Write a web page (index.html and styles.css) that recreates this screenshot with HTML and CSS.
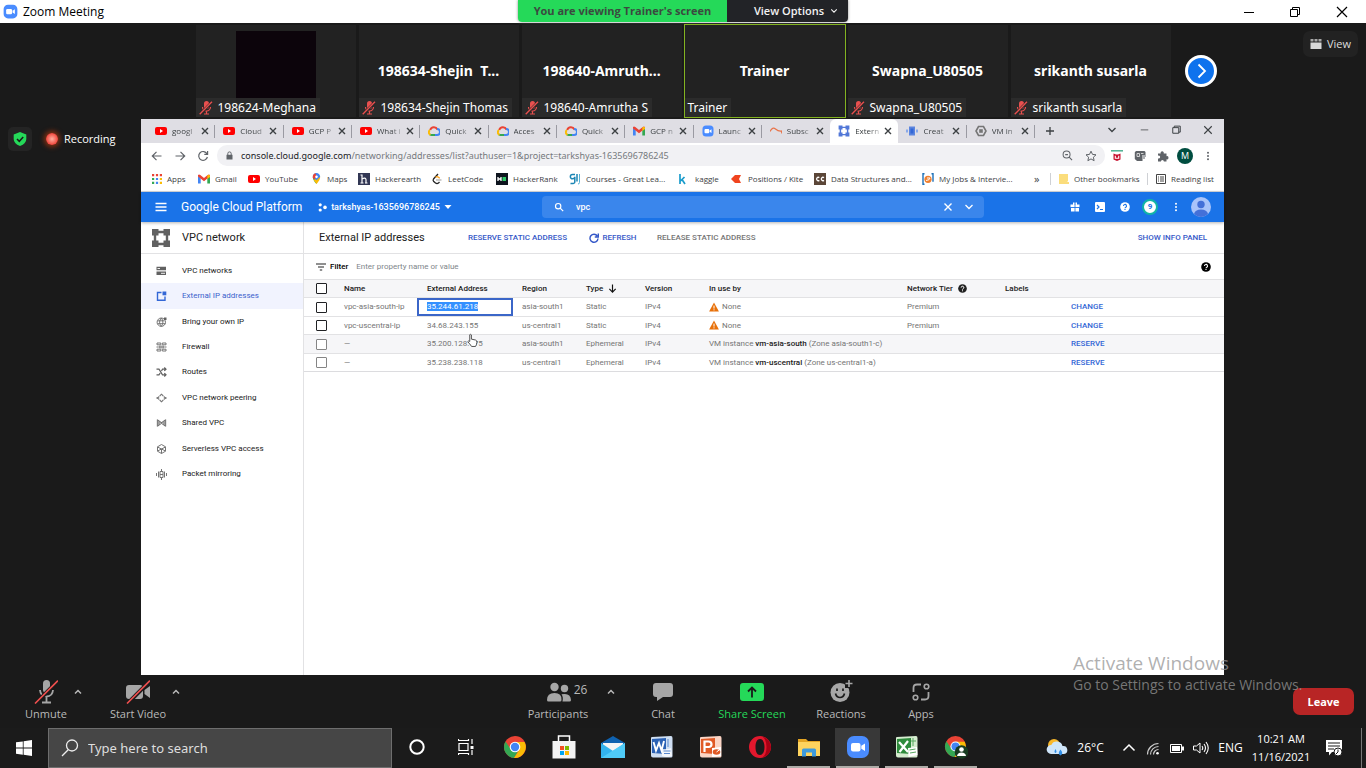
FILE: index.html
```html
<!DOCTYPE html>
<html lang="en">
<head>
<meta charset="utf-8">
<title>Zoom Meeting</title>
<link rel="stylesheet" href="styles.css">
</head>
<body>
<svg class="defs" aria-hidden="true">
  <symbol id="yt" viewBox="0 0 12 12"><rect y="2" width="12" height="8" rx="2" fill="#f00"/><path d="M5 4l3 2-3 2z" fill="#fff"/></symbol>
  <symbol id="gcp" viewBox="0 0 12 12"><path d="M2.200 5A4 4 0 0 1 9.500 4.400" fill="none" stroke="#ea4335" stroke-width="2"/><path d="M9 4a3 3 0 0 1 0 6H6.500" fill="none" stroke="#4285f4" stroke-width="2"/><path d="M7 10H3.500a2.500 2.500 0 0 1-1.500-.6" fill="none" stroke="#34a853" stroke-width="2"/><path d="M2.500 9.800A2.600 2.600 0 0 1 2 5.200" fill="none" stroke="#fbbc05" stroke-width="2"/></symbol>
  <symbol id="gmail" viewBox="0 0 12 12"><path d="M0 3v7.500h2.700V5z" fill="#4285f4"/><path d="M12 3v7.500H9.300V5z" fill="#34a853"/><path d="M0 3.500V2q1-1 2.300 0L6 5l3.700-3Q11 1 12 2v1.500L6 8.200z" fill="#ea4335"/><path d="M9.300 2.300Q11 1 12 2.500v1.500L9.300 6z" fill="#fbbc05"/></symbol>
  <symbol id="zoom" viewBox="0 0 24 24"><rect x="1" y="1" width="22" height="22" rx="7" fill="#4a8cff"/><rect x="5" y="8" width="9.500" height="8.500" rx="2" fill="#fff"/><path d="M15.300 10.800l3.700-2.300v7.500l-3.700-2.300z" fill="#fff"/></symbol>
  <symbol id="vpc" viewBox="0 0 20 20"><path d="M4 4h12v12H4z" fill="none" stroke="currentColor" stroke-width="2.400"/><path d="M1 1h6.500v6.500H1zM12.500 1H19v6.500h-6.500zM1 12.500h6.500V19H1zM12.500 12.500H19V19h-6.500z" fill="currentColor"/></symbol>
  <symbol id="x" viewBox="0 0 10 10"><path d="M2 2l6 6M8 2l-6 6" fill="none" stroke="currentColor" stroke-width="1.400"/></symbol>
  <symbol id="min" viewBox="0 0 12 12"><path d="M1 6.500h10" stroke="currentColor"/></symbol>
  <symbol id="max" viewBox="0 0 12 12"><path d="M1.500 3.500h7v7h-7zM3.500 3.500v-2h7v7h-2" fill="none" stroke="currentColor"/></symbol>
  <symbol id="up" viewBox="0 0 8 8"><path d="M1 5.500l3-3 3 3" fill="none" stroke="currentColor" stroke-width="1.500"/></symbol>
  <symbol id="down" viewBox="0 0 10 10"><path d="M1.500 3l3.500 3.500L8.500 3" fill="none" stroke="currentColor" stroke-width="1.300"/></symbol>
  <symbol id="muted" viewBox="0 0 14 14"><rect x="5" y="0" width="5" height="8" rx="2.500" fill="#e8504f"/><path d="M3.500 6a4 4 0 0 0 8 0M7.500 10v3M5 13h5" fill="none" stroke="#e8504f" stroke-width="1.200"/><path d="M1 13.500L13 1" stroke="#252525" stroke-width="2.600"/><path d="M.7 13.300L13 .7" stroke="#e8504f" stroke-width="1.400"/></symbol>
  <symbol id="help" viewBox="0 0 10 10"><circle cx="5" cy="5" r="4.800" fill="currentColor"/><path d="M3.500 4a1.500 1.500 0 1 1 2.300 1.200Q5 5.600 5 6.300M5 7v1.100" fill="none" stroke="var(--mark, #fff)" stroke-width="1.100"/></symbol>
  <symbol id="warn" viewBox="0 0 10 10"><path d="M5 .6L9.900 9.500H.1z" fill="#e8710a"/><path d="M5 3.600v3M5 7.300v1.100" stroke="#fff"/></symbol>
  <symbol id="dots" viewBox="0 0 12 12"><g fill="currentColor"><circle cx="6" cy="2" r="1.200"/><circle cx="6" cy="6" r="1.200"/><circle cx="6" cy="10" r="1.200"/></g></symbol>
  <symbol id="chrome" viewBox="0 0 24 24"><circle cx="12" cy="12" r="11" fill="#e94335"/><path d="M2.500 6.500A11 11 0 0 0 11 23l5-8.500H8z" fill="#34a853"/><path d="M21.500 7H12l4.300 8L11 23A11 11 0 0 0 21.500 7z" fill="#fbbc05"/><circle cx="12" cy="12" r="5.300" fill="#fff"/><circle cx="12" cy="12" r="4.200" fill="#4285f4"/></symbol>
  <symbol id="glass" viewBox="0 0 12 12"><circle cx="5" cy="5" r="3.200" fill="none" stroke="currentColor" stroke-width="1.400"/><path d="M7.400 7.400L11 11" stroke="currentColor" stroke-width="1.500"/></symbol>
</svg>

<header class="titlebar">
  <svg class="i15"><use href="#zoom"/></svg>
  <h1>Zoom Meeting</h1>
  <div class="win-buttons">
    <button aria-label="Minimize"><svg class="i12"><use href="#min"/></svg></button>
    <button aria-label="Restore"><svg class="i12"><use href="#max"/></svg></button>
    <button aria-label="Close"><svg class="i12" viewBox="0 0 12 12"><path d="M1 1l10 10M11 1L1 11" stroke="currentColor" stroke-width="1.200"/></svg></button>
  </div>
  <div class="share-banner">
    <span class="viewing">You are viewing Trainer's screen</span>
    <button class="view-options">View Options <svg class="i8" viewBox="0 0 10 10"><use href="#down"/></svg></button>
  </div>
</header>

<section class="strip">
  <div class="tiles">
    <article class="tile"><i class="video"></i><span class="tag"><svg class="i14"><use href="#muted"/></svg>198624-Meghana</span></article>
    <article class="tile"><b>198634-Shejin&nbsp; T...</b><span class="tag"><svg class="i14"><use href="#muted"/></svg>198634-Shejin Thomas</span></article>
    <article class="tile"><b>198640-Amruth...</b><span class="tag"><svg class="i14"><use href="#muted"/></svg>198640-Amrutha S</span></article>
    <article class="tile speaking"><b>Trainer</b><span class="tag">Trainer</span></article>
    <article class="tile"><b>Swapna_U80505</b><span class="tag"><svg class="i14"><use href="#muted"/></svg>Swapna_U80505</span></article>
    <article class="tile"><b>srikanth susarla</b><span class="tag"><svg class="i14"><use href="#muted"/></svg>srikanth susarla</span></article>
  </div>
  <div class="strip-end">
    <button class="next" aria-label="Next participants"><svg class="i16" viewBox="0 0 16 16"><path d="M5.500 1.500L12 8l-6.500 6.500" fill="none" stroke="#fff" stroke-width="1.800"/></svg></button>
    <button class="view"><svg class="i12" viewBox="0 0 12 12"><path d="M.5 4.500h11v6.500H.5z" fill="#d8d8d8"/><path d="M.5 1h3v2.500h-3zM4.500 1h3v2.500h-3zM8.500 1h3v2.500h-3z" fill="#a8a8a8"/></svg>View</button>
  </div>
</section>

<main class="stage">
  <aside class="status">
    <button class="shield" aria-label="Encryption"><svg class="i14" viewBox="0 0 14 14"><path d="M7 0l6.300 2.500V7q0 4.500-6.300 7Q.7 11.500.7 7V2.500z" fill="#25d959"/><path d="M4 7l2.300 2.300L10.200 5" fill="none" stroke="#1a1a1a" stroke-width="1.500"/></svg></button>
    <span class="rec-dot"></span>
    <span>Recording</span>
  </aside>

  <div class="browser">
    <div class="tabbar">
      <div class="tabs">
        <div class="tab"><svg class="i12"><use href="#yt"/></svg><span>googl</span><button aria-label="Close tab"><svg class="i10"><use href="#x"/></svg></button></div>
        <div class="tab"><svg class="i12"><use href="#yt"/></svg><span>Cloud</span><button aria-label="Close tab"><svg class="i10"><use href="#x"/></svg></button></div>
        <div class="tab"><svg class="i12"><use href="#yt"/></svg><span>GCP P</span><button aria-label="Close tab"><svg class="i10"><use href="#x"/></svg></button></div>
        <div class="tab"><svg class="i12"><use href="#yt"/></svg><span>What i</span><button aria-label="Close tab"><svg class="i10"><use href="#x"/></svg></button></div>
        <div class="tab"><svg class="i12"><use href="#gcp"/></svg><span>Quick</span><button aria-label="Close tab"><svg class="i10"><use href="#x"/></svg></button></div>
        <div class="tab"><svg class="i12"><use href="#gcp"/></svg><span>Acces</span><button aria-label="Close tab"><svg class="i10"><use href="#x"/></svg></button></div>
        <div class="tab"><svg class="i12"><use href="#gcp"/></svg><span>Quick</span><button aria-label="Close tab"><svg class="i10"><use href="#x"/></svg></button></div>
        <div class="tab"><svg class="i12"><use href="#gmail"/></svg><span>GCP n</span><button aria-label="Close tab"><svg class="i10"><use href="#x"/></svg></button></div>
        <div class="tab"><svg class="i12"><use href="#zoom"/></svg><span>Launc</span><button aria-label="Close tab"><svg class="i10"><use href="#x"/></svg></button></div>
        <div class="tab before"><svg class="i12" viewBox="0 0 12 12"><path d="M0 6.500Q2.500 1.500 5.500 4t6 2l.3 2.500" fill="none" stroke="#e8744a" stroke-width="1.200"/></svg><span>Subsc</span><button aria-label="Close tab"><svg class="i10"><use href="#x"/></svg></button></div>
        <div class="tab active"><svg class="i12 vpc-tab"><use href="#vpc"/></svg><span>Extern</span><button aria-label="Close tab"><svg class="i10"><use href="#x"/></svg></button></div>
        <div class="tab"><svg class="i12" viewBox="0 0 12 12"><path d="M3 1.500h6v9H3z" fill="#5c85de"/><path d="M0 4.500h2v3H0zM10 4.500h2v3h-2z" fill="#8aa9ea"/><path d="M4.500 3.500h3v5h-3z" fill="#3367d6"/></svg><span>Creat</span><button aria-label="Close tab"><svg class="i10"><use href="#x"/></svg></button></div>
        <div class="tab"><svg class="i12" viewBox="0 0 12 12"><path d="M3.500 1.500h5L11 6l-2.500 4.500h-5L1 6z" fill="none" stroke="#757575" stroke-width="1.600"/><path d="M4.200 4.200h3.600v3.600H4.200z" fill="#757575"/></svg><span>VM in</span><button aria-label="Close tab"><svg class="i10"><use href="#x"/></svg></button></div>
      </div>
      <button class="new-tab" aria-label="New tab"><svg class="i10" viewBox="0 0 10 10"><path d="M5 1v8M1 5h8" stroke="currentColor" stroke-width="1.300"/></svg></button>
      <div class="chrome-buttons">
        <button aria-label="Search tabs"><svg class="i10"><use href="#down"/></svg></button>
        <button aria-label="Minimize"><svg class="i9" viewBox="0 0 12 12"><use href="#min"/></svg></button>
        <button aria-label="Restore"><svg class="i9" viewBox="0 0 12 12"><path d="M1 3.500h8V11H1zM3 3.500V1.500h8v8H9" fill="none" stroke="currentColor" stroke-width="1.300"/></svg></button>
        <button aria-label="Close"><svg class="i10" viewBox="1 1 8 8"><path d="M2 2l6 6M8 2L2 8" stroke="currentColor" stroke-width=".9"/></svg></button>
      </div>
    </div>

    <div class="address-row">
      <button aria-label="Back"><svg class="i12" viewBox="0 0 12 12"><path d="M10.500 6h-9M5.500 1.800L1.300 6l4.200 4.200" fill="none" stroke="currentColor" stroke-width="1.200"/></svg></button>
      <button aria-label="Forward"><svg class="i12" viewBox="0 0 12 12"><path d="M1.500 6h9M6.500 1.800L10.700 6l-4.200 4.200" fill="none" stroke="currentColor" stroke-width="1.200"/></svg></button>
      <button aria-label="Reload"><svg class="i12" viewBox="0 0 12 12"><path d="M10 3.800A4.400 4.400 0 1 0 10.400 7M10.600 1v3.300H7.300" fill="none" stroke="currentColor" stroke-width="1.200"/></svg></button>
      <div class="omnibox">
        <svg class="i9" viewBox="0 0 9 9"><path d="M1.500 3.800h6v4.700h-6z" fill="#5f6368"/><path d="M2.800 4V2.600a1.700 1.700 0 0 1 3.400 0V4" fill="none" stroke="#5f6368"/></svg>
        <span class="url"><em>console.cloud.google.com</em>/networking/addresses/list?authuser=1&amp;project=tarkshyas-1635696786245</span>
        <svg class="i11" viewBox="0 0 12 12"><circle cx="5" cy="5" r="3.800" fill="none" stroke="#5f6368" stroke-width="1.100"/><path d="M7.800 7.800L11 11M3.500 5h3" stroke="#5f6368" stroke-width="1.200"/></svg>
        <svg class="i12" viewBox="0 0 12 12"><path d="M6 1.200l1.500 3.200 3.500.4-2.600 2.400.7 3.500L6 8.900l-3.100 1.800.7-3.500L1 4.800l3.500-.4z" fill="none" stroke="#5f6368"/></svg>
      </div>
      <div class="extensions">
        <button aria-label="Safe browsing"><svg class="i12" viewBox="0 0 12 12"><path d="M0 .8h12" stroke="#4caf91" stroke-width="1.500"/><path d="M2.500 3.500L5 4.500h2l2.500-1v6L6 11 2.500 9.500z" fill="#c8102e"/><path d="M4.300 5.800v2.400h3.400V5.800" fill="none" stroke="#fff" stroke-width="1.100"/></svg></button>
        <button aria-label="Extension"><svg class="i12" viewBox="0 0 12 12"><path d="M2 1h8.500l1 1v3H8.500v6H3L.8 9V2.200z" fill="#5f6368"/><path d="M3 3.500h2.500v3H3zM7 3.500h2.500" fill="none" stroke="#ddd" stroke-width=".9"/><path d="M9 6h3M9 8h2" stroke="#5f6368" stroke-width="1.100"/></svg></button>
        <button aria-label="Extensions"><svg class="i12" viewBox="0 0 12 12"><path d="M1 3.500h2.700a1.600 1.600 0 1 1 3 0h2.800v2.700a1.600 1.600 0 1 1 0 3.100V11.500H6.900a1.500 1.500 0 1 0-3 0H1V8.400a1.500 1.500 0 1 0 0-2.700z" fill="#5f6368"/></svg></button>
        <button class="profile" aria-label="Profile">M</button>
        <button aria-label="Menu"><svg class="i10" viewBox="0 0 12 12"><use href="#dots"/></svg></button>
      </div>
    </div>

    <nav class="bookmarks">
      <a href="#"><svg class="i10" viewBox="0 0 10 10"><path d="M0 0h2.200v2.200H0zM3.900 0h2.200v2.200H3.900zM7.800 0H10v2.200H7.800z" fill="#ea4335"/><path d="M0 3.900h2.200v2.200H0zM0 7.800h2.200V10H0z" fill="#34a853"/><path d="M3.900 3.900h2.200v2.200H3.900zM3.900 7.800h2.200V10H3.900z" fill="#4285f4"/><path d="M7.800 3.900H10v2.200H7.800zM7.800 7.800H10V10H7.800z" fill="#fbbc05"/></svg><span>Apps</span></a>
      <a href="#"><svg class="i12"><use href="#gmail"/></svg><span>Gmail</span></a>
      <a href="#"><svg class="i12"><use href="#yt"/></svg><span>YouTube</span></a>
      <a href="#"><svg class="i11" viewBox="0 0 12 12"><path d="M6 12Q2 7.500 2 4.500L6 4z" fill="#34a853"/><path d="M6 12q4-4.500 4-8L6 4.500 3 8z" fill="#fbbc05"/><path d="M2 4.500A4 4 0 0 1 6 0a4 4 0 0 1 4 4.200L6 8z" fill="#4285f4"/><path d="M2 4.500A4 4 0 0 1 5 .2L6 4 3 7z" fill="#ea4335"/><circle cx="6" cy="4.200" r="1.400" fill="#fff"/></svg><span>Maps</span></a>
      <a href="#"><svg class="i12" viewBox="0 0 12 12"><path d="M0 0h12v12H0z" fill="#323754"/><path d="M4 1.500V10M4 6q3.500-2 4 .5V10M2.500 10H5.500M7 10h2.500M2.500 2H4" fill="none" stroke="#fff" stroke-width="1.200"/></svg><span>Hackerearth</span></a>
      <a href="#"><svg class="i12" viewBox="0 0 12 12"><path d="M7 1L2.500 6q-.8 1.200 0 2.200L4.500 10q1.500 1 3 0L8.500 9" fill="none" stroke="#222" stroke-width="1.300"/><path d="M4.500 4.300Q6 3 7.500 4.300L8.700 5.300" fill="none" stroke="#ffa116" stroke-width="1.300"/><path d="M5 7h5.500" stroke="#aaa" stroke-width="1.200"/></svg><span>LeetCode</span></a>
      <a href="#"><svg class="i12" viewBox="0 0 12 12"><path d="M0 0h12v12H0z" fill="#0e141e"/><path d="M2 4v4M5 4v4M2 6h3" stroke="#fff" stroke-width="1.300"/><path d="M6.500 4H10v4H6.500z" fill="#2ec866"/></svg><span>HackerRank</span></a>
      <a href="#"><svg class="i12" viewBox="0 0 12 12"><path d="M6 1.500H3.500a2 2 0 1 0 0 4.300q2.300 0 2.300-2V9q0 2-4.300 1.500M8 1v7.500" fill="none" stroke="#1c86b5" stroke-width="1.500"/><path d="M10.500 1v8.500q0 1.500-1.500 1.500" fill="none" stroke="#55b1d5"/></svg><span>Courses - Great Lea...</span></a>
      <a href="#"><svg class="i12" viewBox="0 0 12 12"><path d="M2 1v10M6.500 4L2.500 8M4 6.500L7 11" fill="none" stroke="#1a9ccc" stroke-width="1.700"/></svg><span>kaggle</span></a>
      <a href="#"><svg class="i12" viewBox="0 0 12 12"><path d="M0 6l4-4h6L8 6l2 4H4z" fill="#f0441f"/></svg><span>Positions / Kite</span></a>
      <a href="#"><svg class="i12" viewBox="0 0 12 12"><path d="M0 0h12v12H0z" fill="#5b4638"/><path d="M5.300 4.600a1.700 1.700 0 1 0 0 2.800M10 4.600a1.700 1.700 0 1 0 0 2.800" fill="none" stroke="#fff" stroke-width="1.300"/></svg><span>Data Structures and...</span></a>
      <a href="#"><svg class="i12" viewBox="0 0 12 12"><path d="M2.500.7H1v10.600h1.500M9.500.7H11v8" fill="none" stroke="#1d71b8" stroke-width="1.400"/><circle cx="6" cy="6.300" r="3.600" fill="#f07f2e"/><path d="M4 7.500q4-.3 4-2.500H5" fill="none" stroke="#fff"/></svg><span>My Jobs &amp; Intervie...</span></a>
      <button class="more" aria-label="More bookmarks">»</button>
      <a href="#" class="ruled"><svg class="i10" viewBox="0 0 10 10"><path d="M0 0h9v7l-1 1h2v2H0z" fill="#fbdd7c"/></svg><span>Other bookmarks</span></a>
      <a href="#" class="ruled"><svg class="i10" viewBox="0 0 10 10"><path d="M.5.500h9v9h-9zM2 3h1M4 3h4M2 5h1M4 5h4M2 7h1M4 7h4" fill="none" stroke="#444"/></svg><span>Reading list</span></a>
    </nav>

    <div class="gcp-bar">
      <button aria-label="Navigation menu"><svg class="i12" viewBox="0 0 12 12"><path d="M.5 2.500h11M.5 6h11M.5 9.500h11" stroke="#fff" stroke-width="1.300"/></svg></button>
      <a class="brand" href="#">Google Cloud Platform</a>
      <button class="project"><svg class="i9" viewBox="0 0 9 9"><g fill="#fff"><circle cx="2.200" cy="1.800" r="1.600"/><circle cx="2.200" cy="7" r="1.600"/><circle cx="7" cy="4.400" r="1.800"/></g></svg>tarkshyas-1635696786245<svg class="i8" viewBox="0 0 8 8"><path d="M.5 2h7L4 6z" fill="#fff"/></svg></button>
      <label class="gcp-search"><svg class="i10" viewBox="0 0 12 12"><use href="#glass"/></svg><input type="text" value="vpc" aria-label="Search"><svg class="i12" viewBox="0 0 12 12"><path d="M2.500 2.500l7 7M9.500 2.500l-7 7" stroke="#fff" stroke-width="1.400"/></svg><svg class="i10"><use href="#down"/></svg></label>
      <div class="gcp-tools">
        <button aria-label="Gifts"><svg class="i10" viewBox="0 0 10 10"><path d="M.5 2.500h9v3h-9zM1 6h8v3.500H1zM3 .5h1.500v2H3zM5.500.500H7v2H5.500z" fill="#fff"/><path d="M5 2v8M0 5.500h10" stroke="#1a73e8" stroke-width=".8"/></svg></button>
        <button aria-label="Cloud Shell"><svg class="i10" viewBox="0 0 10 10"><rect width="10" height="10" rx="1" fill="#fff"/><path d="M2 3l2 2-2 2M5 7.500h3" fill="none" stroke="#1a73e8" stroke-width="1.200"/></svg></button>
        <button class="help-blue" aria-label="Help"><svg class="i10"><use href="#help"/></svg></button>
        <button class="badge" aria-label="Notifications">9</button>
        <button aria-label="More"><svg class="i10" viewBox="0 0 12 12"><use href="#dots"/></svg></button>
        <button aria-label="Account"><svg class="i20" viewBox="0 0 20 20"><circle cx="10" cy="10" r="10" fill="#a9c4fa"/><circle cx="10" cy="7.500" r="3.700" fill="#4470d8"/><path d="M3 17q1-4.500 7-4.500t7 4.500q-3 3-7 3t-7-3z" fill="#4470d8"/></svg></button>
      </div>
    </div>

    <div class="console">
      <aside class="side">
        <h2><svg class="i20"><use href="#vpc"/></svg>VPC network</h2>
        <nav>
          <a href="#"><svg class="i10" viewBox="0 0 10 10"><path d="M0 .8h9.500v3.400H0zM0 5.600h9.500V9H0z" fill="#616161"/><path d="M1 2.500h2.500M4.500 7.300h4" stroke="#fff" stroke-width=".9"/></svg>VPC networks</a>
          <a href="#" class="current"><svg class="i10" viewBox="0 0 10 10"><path d="M5 1.500H1v7.800h7.500V5.500" fill="none" stroke="#3367d6" stroke-width="1.400"/><path d="M6 .5h3.800v3.800H6z" fill="#3367d6"/></svg>External IP addresses</a>
          <a href="#"><svg class="i10" viewBox="0 0 10 10"><circle cx="4.800" cy="5.200" r="4.200" fill="none" stroke="#757575"/><path d="M1 3.800h7M1 6.700h8M4.800 1q-3.500 4 0 8.400Q8 5 4.800 1z" fill="none" stroke="#757575"/><path d="M7.500.500H10V3H7.500z" fill="#616161"/></svg>Bring your own IP</a>
          <a href="#"><svg class="i10" viewBox="0 0 10 10"><path d="M.5 1h3.800v1.800H.5zM5.800 1h3.700v1.800H5.800zM.5 7.200h3.800V9H.5zM5.800 7.200h3.700V9H5.800zM2.500 4.200h5v1.600h-5zM0 5h1.500M8.500 5H10" fill="none" stroke="#757575"/></svg>Firewall</a>
          <a href="#"><svg class="i10" viewBox="0 0 10 10"><path d="M0 2.200h2.500L6 7.800h3M0 7.800h2.500L3.700 6M5 4l1-1.800h3M7.800.500L9.500 2.200 7.800 3.900M7.800 6.100l1.700 1.700-1.700 1.700" fill="none" stroke="#616161" stroke-width="1.200"/></svg>Routes</a>
          <a href="#"><svg class="i10" viewBox="0 0 10 10"><path d="M3.200 3L5 1.200 6.800 3M3.200 7L5 8.800 6.800 7M2.800 3.500L1 5l1.800 1.500M7.200 3.500L9 5 7.200 6.500" fill="none" stroke="#757575" stroke-width="1.100"/><path d="M0 4.200h1.500v1.600H0zM8.500 4.200H10v1.600H8.500z" fill="#757575"/></svg>VPC network peering</a>
          <a href="#"><svg class="i10" viewBox="0 0 10 10"><path d="M1 1.500v7M9 1.500v7M1 2l8 6M9 2L1 8" fill="none" stroke="#616161" stroke-width="1.300"/><path d="M1 2l4 3-4 3zM9 2L5 5l4 3z" fill="#9e9e9e"/></svg>Shared VPC</a>
          <a href="#"><svg class="i10" viewBox="0 0 10 10"><path d="M5 .5l4 2.300v4.400L5 9.500 1 7.200V2.800zM1 3l4 2 4-2M5 5v4.500M1 7l4-2 4 2" fill="none" stroke="#757575"/></svg>Serverless VPC access</a>
          <a href="#"><svg class="i11" viewBox="0 0 11 11"><path d="M5.500 0v11M.5 4v3M2.500 2.500v6M8.500 2.500v6M10.500 4v3" stroke="#757575"/><path d="M4 2.500h3v6H4z" fill="#fff" stroke="#757575"/><path d="M4 5.500h3" stroke="#757575"/></svg>Packet mirroring</a>
        </nav>
      </aside>

      <section class="content">
        <div class="actions">
          <h2>External IP addresses</h2>
          <button class="reserve">RESERVE STATIC ADDRESS</button>
          <button class="refresh"><svg class="i10" viewBox="0 0 10 10"><path d="M8.300 3A4 4 0 1 0 9 5.500M9.300.500V4H5.800" fill="none" stroke="#3558c8" stroke-width="1.400"/></svg>REFRESH</button>
          <button class="release" disabled>RELEASE STATIC ADDRESS</button>
          <button class="info">SHOW INFO PANEL</button>
        </div>
        <div class="filter">
          <svg class="i10" viewBox="0 0 10 10"><path d="M0 2h10M2 5h6M3.800 8h2.400" stroke="#222" stroke-width="1.200"/></svg>
          <label for="filter">Filter</label>
          <input id="filter" type="text" placeholder="Enter property name or value">
          <svg class="i10"><use href="#help"/></svg>
        </div>
        <table>
          <colgroup><col class="c-check"><col class="c-name"><col class="c-addr"><col class="c-region"><col class="c-type"><col class="c-ver"><col class="c-use"><col class="c-tier"><col class="c-labels"><col></colgroup>
          <thead><tr><th><input type="checkbox" aria-label="Select all"></th><th>Name</th><th>External Address</th><th>Region</th><th>Type <svg class="i9 arrow" viewBox="0 0 10 10"><path d="M5 .5v8.500M1.500 5.500L5 9l3.500-3.500" fill="none" stroke="#111" stroke-width="1.300"/></svg></th><th>Version</th><th>In use by</th><th>Network Tier <svg class="i9 q"><use href="#help"/></svg></th><th>Labels</th><th></th></tr></thead>
          <tbody>
            <tr><td><input type="checkbox" aria-label="Select vpc-asia-south-ip"></td><td>vpc-asia-south-ip</td><td class="focused"><mark>35.244.61.218</mark></td><td>asia-south1</td><td>Static</td><td>IPv4</td><td><svg class="i10 w"><use href="#warn"/></svg>None</td><td>Premium</td><td></td><td><button>CHANGE</button></td></tr>
            <tr><td><input type="checkbox" aria-label="Select vpc-uscentral-ip"></td><td>vpc-uscentral-ip</td><td>34.68.243.155</td><td>us-central1</td><td>Static</td><td>IPv4</td><td><svg class="i10 w"><use href="#warn"/></svg>None</td><td>Premium</td><td></td><td><button>CHANGE</button></td></tr>
            <tr class="hover"><td><input type="checkbox" disabled aria-label="Select 35.200.128.175"></td><td>—</td><td>35.200.128.175<svg class="cursor" viewBox="0 0 12 15"><path d="M3 1.200q1-1 1.800.2V6l4.500 1q1.700.4 1.500 2.500-.3 3-1.500 4.500H5Q3 11 .8 8.800q.6-1.300 2.200-.3z" fill="#fff" stroke="#444"/></svg></td><td>asia-south1</td><td>Ephemeral</td><td>IPv4</td><td>VM instance <a href="#">vm-asia-south</a> (Zone asia-south1-c)</td><td></td><td></td><td><button>RESERVE</button></td></tr>
            <tr><td><input type="checkbox" disabled aria-label="Select 35.238.238.118"></td><td>—</td><td>35.238.238.118</td><td>us-central1</td><td>Ephemeral</td><td>IPv4</td><td>VM instance <a href="#">vm-uscentral</a> (Zone us-central1-a)</td><td></td><td></td><td><button>RESERVE</button></td></tr>
          </tbody>
        </table>
      </section>
    </div>
  </div>
</main>

<footer class="meeting-bar">
  <div class="group left">
    <button class="tool unmute"><svg class="i24" viewBox="0 0 24 24"><rect x="9" y="0" width="7" height="13" rx="3.500" fill="#a6a6a6"/><path d="M6 10q.5 6.500 6.500 6.500T19 10M12.500 17v5M8 22.500h9" fill="none" stroke="#a6a6a6" stroke-width="1.800"/><path d="M1 24L24 1" stroke="#1a1a1a" stroke-width="4"/><path d="M1 23.500L24 .5" stroke="#f0504f" stroke-width="1.600"/></svg>Unmute</button>
    <button class="caret" aria-label="Audio options"><svg class="i8"><use href="#up"/></svg></button>
    <button class="tool video-btn"><svg class="i24" viewBox="0 0 24 24"><rect x="0" y="5" width="17" height="14" rx="3" fill="#a6a6a6"/><path d="M18.500 10L24 6v12l-5.500-4z" fill="#a6a6a6"/><path d="M1 24L24 1" stroke="#1a1a1a" stroke-width="4"/><path d="M1 23.500L24 .5" stroke="#f0504f" stroke-width="1.600"/></svg>Start Video</button>
    <button class="caret" aria-label="Video options"><svg class="i8"><use href="#up"/></svg></button>
  </div>
  <div class="group middle">
    <button class="tool people"><span class="with-count"><svg class="i24" viewBox="0 0 24 24"><g fill="#a6a6a6"><circle cx="7.500" cy="7" r="4.200"/><circle cx="17.500" cy="8.500" r="3.700"/><path d="M0 20q0-7 7.500-7t7 7q0 1.500-1.500 1.500H1.500Q0 21.500 0 20zM15.500 21.500q1-4.500-1-7.200 9-2 9.500 5.700 0 1.500-1.500 1.500z"/></g></svg><span>26</span></span>Participants</button>
    <button class="caret" aria-label="Participant options"><svg class="i8"><use href="#up"/></svg></button>
    <button class="tool chat"><svg class="i24" viewBox="0 0 24 24"><path d="M5 3h14q3 0 3 3v8q0 3-3 3h-7l-6 4v-4H5q-3 0-3-3V6q0-3 3-3z" fill="#a6a6a6"/></svg>Chat</button>
    <button class="tool share"><svg class="i24" viewBox="0 0 24 24"><rect y="3" width="24" height="18" rx="3" fill="#25d959"/><path d="M12 17.500V8M8 11.500l4-4 4 4" fill="none" stroke="#1a1a1a" stroke-width="1.800"/></svg>Share Screen</button>
    <button class="tool react"><svg class="i24" viewBox="0 0 24 24"><circle cx="11" cy="12.500" r="9.500" fill="#a6a6a6"/><path d="M6.500 13.500q1 4 4.500 4t4.500-4M8 8.500V11M14 8.500V11" fill="none" stroke="#1a1a1a" stroke-width="1.700"/><path d="M16 0h8v8h-8z" fill="#1a1a1a"/><path d="M20 0v7M16.500 3.500h7" stroke="#a6a6a6" stroke-width="1.600"/></svg>Reactions</button>
    <button class="tool apps"><svg class="i24" viewBox="0 0 24 24"><path d="M4.500 12V8q0-3.500 3.500-3.500h4M19.500 12v4q0 3.500-3.500 3.500h-4" fill="none" stroke="#a6a6a6" stroke-width="1.800"/><circle cx="17.500" cy="6.500" r="2.300" fill="none" stroke="#a6a6a6" stroke-width="1.600"/><circle cx="6.500" cy="17.500" r="2.300" fill="none" stroke="#a6a6a6" stroke-width="1.600"/></svg>Apps</button>
  </div>
  <button class="leave">Leave</button>
</footer>

<footer class="taskbar">
  <button class="start" aria-label="Start"><svg class="i16" viewBox="0 0 16 16"><path d="M0 2.300L6.800 1.400v6.200H0zM7.600 1.300L16 0v7.600H7.600zM0 8.400h6.800v6.300L0 13.700zM7.600 8.400H16V16l-8.400-1.200z" fill="#fff"/></svg></button>
  <label class="search"><svg class="i18" viewBox="0 0 18 18"><circle cx="11" cy="6.500" r="5.500" fill="none" stroke="#eee" stroke-width="1.300"/><path d="M7.200 10.800L1 17" stroke="#eee" stroke-width="1.300"/></svg><input type="text" placeholder="Type here to search" aria-label="Type here to search"></label>
  <div class="apps-row">
    <button aria-label="Cortana"><svg class="i16" viewBox="0 0 16 16"><circle cx="8" cy="8" r="6.700" fill="none" stroke="#fff" stroke-width="2"/></svg></button>
    <button aria-label="Task View"><svg class="i16" viewBox="0 0 16 16"><path d="M1 4.500h9v7H1zM.500 0v1.500h10V0M.500 16v-1.500h10V16M14 0v5M14 11v5" fill="none" stroke="#fff" stroke-width="1.200"/><path d="M12.500 7h3v3h-3z" fill="#fff"/></svg></button>
    <button aria-label="Chrome"><svg class="i24"><use href="#chrome"/></svg></button>
    <button aria-label="Store"><svg class="i24" viewBox="0 0 24 24"><path d="M6.500 6V1h11v5" fill="none" stroke="#fff" stroke-width="1.500"/><path d="M.5 6h23v17.500H.5z" fill="#f3f3f3"/><path d="M8 11h4v4H8z" fill="#f25022"/><path d="M13 11h4v4h-4z" fill="#7fba00"/><path d="M8 16h4v4H8z" fill="#00a4ef"/><path d="M13 16h4v4h-4z" fill="#ffb900"/></svg></button>
    <button aria-label="Mail"><svg class="i24" viewBox="0 0 24 24"><path d="M0 8l12-7 12 7v4H0z" fill="#0f62b0"/><path d="M2 8h20v8H2z" fill="#f5f5f5"/><path d="M0 8l12 8 12-8v15H0z" fill="#32b3ee"/><path d="M0 23L24 8v15z" fill="#4fcbf8"/></svg></button>
    <button aria-label="Word"><svg class="i24" viewBox="0 0 24 24"><path d="M1 3q0-1 1-1l19-1q1.500 0 1.500 2v18q0 1.500-1.500 1.500H3q-2 0-2-2z" fill="#cfdff3"/><path d="M2 4l14-1v16L2 18z" fill="#2b62b5"/><path d="M3.500 7L6 15.500 9 8l2.500 7.500L14 6" fill="none" stroke="#fff" stroke-width="1.900"/><path d="M12 14q5 1 9-1l1 8q-5 2-10 0z" fill="#f5f8fc"/><path d="M18 4v8M13.500 16h7M14 18.500h6" stroke="#5b8bd0"/></svg></button>
    <button aria-label="PowerPoint"><svg class="i24" viewBox="0 0 24 24"><path d="M1 3q0-1 1-1l19-1q1.500 0 1.500 2v18q0 1.500-1.500 1.500H3q-2 0-2-2z" fill="#fbd5c5"/><path d="M2 4l14-1v16L2 18z" fill="#e05a26"/><path d="M5.500 17V6.500h4q3 0 3 2.700t-3 2.800h-4" fill="none" stroke="#fff" stroke-width="2.200"/><path d="M13 13l9-1v9l-9 1z" fill="#fff"/><ellipse cx="17.500" cy="17" rx="3.800" ry="2.800" fill="#e05a26"/><path d="M17.500 17l4-3" stroke="#fff"/></svg></button>
    <button aria-label="Opera"><svg class="i24" viewBox="0 0 24 24"><path d="M12 1a11 11 0 1 0 0 22 11 11 0 1 0 0-22zm0 3c3 0 4.500 3.500 4.500 8S15 20 12 20s-4.500-3.500-4.500-8S9 4 12 4z" fill="#e3182d" fill-rule="evenodd"/><path d="M14 1.200q8 2 9 10.800-.6 9-9 10.800 4.500-3 4.500-10.800T14 1.200z" fill="#a70014"/></svg></button>
    <button class="open" aria-label="File Explorer"><svg class="i24" viewBox="0 0 24 24"><path d="M1 4h8l2 2h12v5H1z" fill="#e5a523"/><path d="M1 7h22v14H1z" fill="#ffd45e"/><path d="M5 21.500V15q0-1.500 1.500-1.500h11q1.500 0 1.500 1.500v6.500h-4V17.500H9v4z" fill="#3f9bdc"/></svg></button>
    <button class="open selected" aria-label="Zoom"><svg class="i24"><use href="#zoom"/></svg></button>
    <button class="open" aria-label="Excel"><svg class="i24" viewBox="0 0 24 24"><path d="M1 3q0-1 1-1l19-1q1.500 0 1.500 2v18q0 1.500-1.500 1.500H3q-2 0-2-2z" fill="#d5eccf"/><path d="M2 4l14-1v16L2 18z" fill="#2e8b3c"/><path d="M4 7l9 10M13 6L4.500 17" stroke="#fff" stroke-width="2.200"/><path d="M13 13l9-1 .5 8-9 2z" fill="#fff"/><path d="M14.500 15l6-1M15 18l6-1M18 3v8M16 6h5" stroke="#58a860"/></svg></button>
    <button class="open" aria-label="Chrome profile"><svg class="i24" viewBox="0 0 24 24"><use href="#chrome" width="23" height="23"/><circle cx="17.500" cy="17" r="6.800" fill="#173c21"/><circle cx="17.500" cy="14.500" r="2.300" fill="#fff"/><path d="M13 21q.5-3.500 4.500-3.500T22 21z" fill="#fff"/></svg></button>
  </div>
  <div class="tray">
    <button class="weather"><svg class="i22" viewBox="0 0 22 22"><circle cx="8" cy="8" r="6" fill="#f9b82b"/><path d="M5 17a4.500 4.500 0 0 1 .3-9A6 6 0 0 1 16.500 9 4 4 0 0 1 18 17z" fill="#cfe6fa"/><path d="M9.500 12q2 3 0 4-2-1 0-4zM14.500 12.500q3.500 4 0 6-3.500-2 0-6z" fill="#2f8fe8"/></svg>26°C</button>
    <button class="t24" aria-label="Hidden icons"><svg class="i14" viewBox="0 0 14 14"><path d="M1.500 9.500L7 4l5.500 5.500" fill="none" stroke="#fff" stroke-width="1.500"/></svg></button>
    <button class="t24" aria-label="Network"><svg class="i14" viewBox="0 0 14 14"><path d="M1.500 13.500A11 11 0 0 1 12.500 2.500M4.500 13.500a8 8 0 0 1 8-8M7.500 13.500a5 5 0 0 1 5-5" fill="none" stroke="#ccc" stroke-width="1.200"/><circle cx="11.500" cy="12.300" r="1.300" fill="#fff"/></svg></button>
    <button class="t24" aria-label="Battery"><svg class="i14" viewBox="0 0 14 14"><path d="M.5 3.500h11v8H.5z" fill="none" stroke="#fff"/><path d="M2 5h8v5H2zM12 5.500h2v4h-2z" fill="#fff"/></svg></button>
    <button class="t24" aria-label="Volume"><svg class="i16" viewBox="0 0 16 16"><path d="M.5 6h3L7 3v10L3.500 10h-3z" fill="none" stroke="#fff"/><path d="M9 6q1.500 2 0 4M11 4q3 4 0 8M13 2q4.500 6 0 12" fill="none" stroke="#fff" stroke-width="1.100"/></svg></button>
    <button class="lang">ENG</button>
    <button class="clock"><span>10:21 AM</span><span>11/16/2021</span></button>
    <button class="notes" aria-label="Notifications"><svg class="i18" viewBox="0 0 18 18"><path d="M1 1h16v12H7l-3 3.500V13H1z" fill="#fff"/><path d="M3 4h12M3 7h12M3 10h6" stroke="#1a1a1a" stroke-width="1.100"/><circle cx="13" cy="13" r="4" fill="#fff" stroke="#1a1a1a"/><path d="M13 10.500V13l-2 2" fill="none" stroke="#1a1a1a"/></svg></button>
  </div>
</footer>

<div class="watermark"><p>Activate Windows</p><p>Go to Settings to activate Windows.</p></div>
</body>
</html>
```

FILE: styles.css
```css
* { box-sizing: border-box; }
body {
  margin: 0;
  min-height: 100vh;
  display: flex;
  flex-direction: column;
  background: #1a1a1a;
  color: #fff;
  font: 12px/16px "Open Sans", "Noto Sans", sans-serif;
  overflow: hidden;
}
h1, h2, p { margin: 0; font-weight: 400; }
button, input { font: inherit; color: inherit; background: none; border: 0; padding: 0; margin: 0; outline: 0; }
button { display: inline-flex; align-items: center; justify-content: center; white-space: nowrap; }
a { color: inherit; text-decoration: none; }
svg { display: block; flex: none; }
.defs { position: absolute; width: 0; height: 0; }
.i8 { width: 8px; height: 8px; }
.i9 { width: 9px; height: 9px; }
.i10 { width: 10px; height: 10px; }
.i11 { width: 11px; height: 11px; }
.i12 { width: 12px; height: 12px; }
.i14 { width: 14px; height: 14px; }
.i15 { width: 15px; height: 15px; }
.i16 { width: 16px; height: 16px; }
.i18 { width: 18px; height: 18px; }
.i20 { width: 20px; height: 20px; }
.i22 { width: 22px; height: 22px; }
.i24 { width: 24px; height: 24px; }

/* Meeting window title */
.titlebar { position: relative; display: flex; align-items: center; gap: 5px; height: 23px; padding-left: 3px; background: #fff; color: #000; }
.titlebar h1 { font-size: 12px; }
.win-buttons { display: flex; margin-left: auto; height: 21px; }
.win-buttons button { width: 46px; }
.win-buttons button:last-child { width: 48px; }
.share-banner { position: absolute; top: 0; left: 50%; transform: translateX(-50%); display: flex; width: 330px; height: 22px; border-radius: 0 0 4px 4px; overflow: hidden; font-size: 11px; font-weight: 600; box-shadow: 0 0 3px #888; }
.viewing { width: 209px; background: #25d959; color: #3b4a40; font-weight: 700; line-height: 22px; text-align: center; white-space: nowrap; }
.view-options { flex: 1; gap: 6px; padding-left: 17px; background: #222327; color: #f2f2f2; }

/* Participant strip */
.strip { display: grid; grid-template-columns: 1fr auto 1fr; height: 96px; padding-top: 2px; }
.tiles { grid-column: 2; display: flex; gap: 3px; height: 92px; font-family: "Noto Sans", sans-serif; }
.tile { position: relative; display: flex; align-items: center; justify-content: center; width: 160px; background: #222; }
.tile b { font-size: 14px; font-weight: 700; white-space: nowrap; }
.speaking { outline: 1px solid #83b321; }
.video { align-self: flex-start; width: 80px; height: 72px; margin-top: 6px; background: #0c040b; }
.tag { position: absolute; left: 0; bottom: 0; display: flex; align-items: center; gap: 5px; height: 19px; padding: 0 4px 0 3px; background: rgba(44, 44, 44, .9); font-size: 12px; white-space: nowrap; }
.strip-end { display: flex; justify-content: space-between; padding: 6px 8px 0 14px; }
.next { align-self: flex-start; width: 32px; height: 32px; margin-top: 24px; border: 3px solid #fff; border-radius: 50%; background: #0e72ed; }
.view { align-self: flex-start; gap: 5px; width: 55px; height: 26px; border-radius: 7px; background: #222; color: #ddd; font-size: 11px; }

/* Shared screen */
.stage { flex: 1; display: flex; padding-right: 142px; }
.status { display: flex; align-items: center; align-self: flex-start; width: 141px; height: 24px; margin-top: 8px; padding-left: 8px; font-size: 11px; }
.shield { width: 24px; height: 24px; border-radius: 5px; background: #242424; }
.rec-dot { width: 12px; height: 12px; margin: 0 6px 0 14px; border-radius: 50%; background: radial-gradient(#ffb0a0, #f2453a 70%); box-shadow: 0 0 5px 2px #8a3010; }
.browser { flex: 1; min-width: 0; display: flex; flex-direction: column; background: #fff; color: #3c4043; font-size: 9px; line-height: 12px; }

.tabbar { display: flex; height: 24px; padding-left: 6px; background: #dfdee4; }
.tabs { display: flex; flex: 0 1 888px; }
.tab { flex: 1; min-width: 0; display: flex; align-items: center; padding-left: 8px; border-radius: 6px 6px 0 0; background: linear-gradient(#9a9aa2, #9a9aa2) right center / 1px 13px no-repeat; font-size: 8px; }
.tab span { flex: none; width: 27px; margin: 0 1px 0 5px; white-space: nowrap; mask-image: linear-gradient(90deg, #000 50%, rgba(0, 0, 0, .3) 90%); }
.tab.active { background: #fff; }
.tab.before { background: none; }
.vpc-tab { color: #5278d8; }
.new-tab { margin-left: 10px; }
.chrome-buttons { display: flex; margin-left: auto; height: 21px; }
.chrome-buttons button { width: 32px; }

.address-row { display: flex; align-items: center; height: 25px; padding: 0 5px 0 4px; color: #5f6368; }
.address-row > button { width: 23px; }
.omnibox { flex: 1; display: flex; align-items: center; gap: 12px; height: 21px; margin-left: 3px; padding: 0 8px 0 8px; border-radius: 10px; background: #f1f1f4; }
.url { flex: 1; margin-left: -5px; color: #75797d; font-family: "Noto Sans", sans-serif; font-size: 9px; white-space: nowrap; }
.url em { color: #202124; font-style: normal; }
.extensions { display: flex; align-items: center; }
.extensions button { width: 23px; }
.extensions .profile { width: 16px; height: 16px; margin: 0 3px; border-radius: 50%; background: #004d40; color: #fff; }

.bookmarks { display: grid; grid-template-columns: 46px 50px 63px 47px 73px 65px 73px 109px 53px 83px 108px 1fr 16px 97px 72px; align-items: center; height: 24px; padding: 0 5px 2px 11px; border-bottom: 1px solid #d5d7dc; font-size: 8px; }
.bookmarks a { display: flex; align-items: center; gap: 5px; white-space: nowrap; }
.bookmarks .ruled { padding-left: 8px; border-left: 1px solid #cfd1d5; }
.bookmarks .more { justify-content: flex-start; font-size: 11px; }

/* Cloud console */
.console, .gcp-bar { font-family: Roboto, sans-serif; }
.gcp-bar { display: flex; align-items: center; height: 30px; padding: 0 12px 0 14px; background: #1a73e8; color: #fff; box-shadow: 0 1px 3px rgba(0, 0, 0, .3); z-index: 1; }
.brand { width: 138px; margin-left: 14px; font-size: 12px; white-space: nowrap; }
.project { gap: 4px; width: 132px; font-size: 9px; font-weight: 500; }
.gcp-search { display: flex; align-items: center; gap: 10px; width: 442px; height: 22px; margin-left: 91px; padding: 0 10px 0 12px; border-radius: 4px; background: #3a86ec; }
.gcp-search input { flex: 1; min-width: 0; padding-left: 2px; font-size: 9px; font-weight: 500; }
.gcp-tools { display: flex; align-items: center; gap: 2px; margin-left: auto; }
.gcp-tools button { width: 23px; height: 22px; }
.help-blue { --mark: #1a73e8; }
.gcp-tools .badge { width: 16px; height: 16px; margin: 0 4px; border: 2px solid #12b5a6; border-radius: 50%; background: #fff; color: #1a73e8; font-size: 8px; font-weight: 700; }

.console { flex: 1; display: grid; grid-template-columns: 163px 1fr; color: #212121; font-size: 8px; }
.side { border-right: 1px solid #e2e2e4; }
.side h2, .actions { display: flex; align-items: center; height: 32px; border-bottom: 1px solid #e2e2e4; font-size: 11px; }
.side h2 { gap: 11px; padding-left: 10px; }
.side h2 svg { color: #616161; }
.side nav { display: grid; grid-template-rows: repeat(9, 1fr); height: 229px; margin-top: 4px; }
.side nav a { display: flex; align-items: center; gap: 15px; padding-left: 15px; }
.side nav a svg { width: 11px; }
.side nav .current { background: #f1f3fe; color: #3c62cc; }
.actions { padding: 0 17px 0 15px; }
.actions h2 { width: 147px; font-size: 11px; }
.actions button { color: #3558c8; font-size: 8px; font-weight: 500; }
.actions .reserve { width: 103px; }
.actions .refresh { gap: 3px; width: 48px; margin: 0 20px; }
.actions .release { color: #757575; }
.actions .info { margin-left: auto; }
.filter { display: flex; align-items: center; gap: 4px; height: 25px; padding: 0 13px 0 12px; color: #000; }
.filter label { font-weight: 500; }
.filter input { flex: 1; margin-left: 4px; }
.filter input::placeholder { color: #80868b; opacity: 1; }
table { width: 100%; table-layout: fixed; border-collapse: collapse; color: #757575; }
.c-check { width: 40px; } .c-name { width: 73px; } .c-addr { width: 105px; } .c-region { width: 64px; } .c-type { width: 59px; }
.c-ver { width: 64px; } .c-use { width: 198px; } .c-tier { width: 98px; } .c-labels { width: 66px; }
th, td { height: 18px; padding: 0; border-top: 1px solid #e2e2e4; text-align: left; white-space: nowrap; line-height: 16px; }
tbody tr:nth-child(odd) td { height: 19px; }
th { background: #f6f6f8; color: #212121; font-weight: 500; }
th:nth-child(3), td:nth-child(3) { position: relative; padding-left: 10px; }
tbody tr:last-child { border-bottom: 1px solid #dcdcdf; }
td:first-child, th:first-child { padding-left: 12px; }
input[type="checkbox"] { appearance: none; display: block; width: 11px; height: 11px; border: 1px solid #202124; border-radius: 1px; background: #fff; }
input[type="checkbox"]:disabled { border-color: #858585; }
.hover td { background: #f6f6f8; }
.focused::after { content: ""; position: absolute; inset: 0 9px 0 0; border: 2px solid #3b66c8; }
mark { background: #3390ff; color: #fff; }
td a { color: #212121; font-weight: 500; }
td button { color: #3367d6; font-weight: 500; }
.w { display: inline-block; margin-right: 3px; vertical-align: middle; }
.arrow, .q { display: inline-block; margin-left: 3px; vertical-align: middle; }
.cursor { position: absolute; left: 50px; top: -2px; width: 11px; height: 15px; }

/* Meeting controls */
.meeting-bar { display: flex; height: 53px; padding-right: 12px; color: #b9b9b9; font-size: 11px; }
.group { display: flex; padding-top: 5px; }
.left { flex: 0 0 527px; padding-left: 18px; }
.tool { flex-direction: column; justify-content: flex-start; gap: 2px; }
.caret { height: 24px; width: 8px; }
.unmute { width: 56px; }
.video-btn { width: 68px; margin-left: 22px; }
.people { width: 62px; margin-right: 18px; }
.with-count { display: flex; align-items: flex-start; gap: 3px; margin-left: 18px; font-size: 12px; line-height: 20px; }
.chat { width: 32px; margin-left: 32px; }
.share { width: 72px; margin-left: 37px; color: #25d959; }
.react { width: 54px; margin-left: 26px; }
.apps { width: 30px; margin-left: 38px; }
.leave { width: 61px; height: 27px; margin: 13px 0 0 auto; border-radius: 7px; background: #b82525; color: #fff; font-weight: 700; }

/* Windows taskbar */
.taskbar { display: flex; height: 40px; background: #1b1b1b; font-size: 12px; }
.start { width: 48px; }
.search { display: flex; align-items: center; gap: 9px; flex: 0 1 344px; padding-left: 12px; border: 1px solid #6e6e6e; background: #464646; }
.search input { flex: 1; min-width: 0; font-family: "Noto Sans", sans-serif; font-size: 13px; }
.search input::placeholder { color: #dedede; opacity: 1; }
.apps-row { display: flex; }
.apps-row button { width: 49px; border-bottom: 2px solid transparent; }
.apps-row .open { border-image: linear-gradient(90deg, transparent 5px, #aeaca8 5px, #aeaca8 44px, transparent 44px) 2; border-style: solid; border-width: 0 0 2px; }
.apps-row .selected { background: linear-gradient(#383838, #383838) center / 45px 100% no-repeat; }
.tray { display: flex; margin: 0 4px 0 auto; padding-right: 7px; border-right: 1px solid #777; }
.weather { gap: 9px; width: 68px; margin-right: 8px; }
.t24 { width: 24px; }
.lang { width: 35px; }
.clock { flex-direction: column; width: 66px; font-size: 11px; line-height: 18px; }
.notes { width: 40px; }

.watermark { position: absolute; right: 58px; bottom: 73px; width: 235px; color: rgba(150, 150, 150, .75); white-space: nowrap; font-size: 14px; line-height: 20px; pointer-events: none; }
.watermark p:first-child { font-size: 19px; line-height: 24px; }
```
